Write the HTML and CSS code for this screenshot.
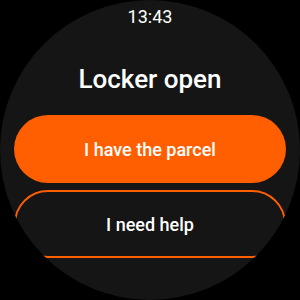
FILE: index.html
```html
<!DOCTYPE html>
<html>
<head>
<meta charset="utf-8">
<link rel="stylesheet" href="styles.css">
</head>
<body>
<div class="watch">
  <div class="time">13:43</div>
  <h1 class="title">Locker open</h1>
  <div class="actions">
    <button class="btn btn-primary">I have the parcel</button>
    <button class="btn btn-outline">I need help</button>
  </div>
</div>
</body>
</html>
```

FILE: styles.css
```css
html, body {
  margin: 0;
  padding: 0;
  background: #000;
}
.watch {
  width: 300px;
  height: 300px;
  border-radius: 50%;
  background: #151515;
  overflow: hidden;
  display: flex;
  flex-direction: column;
  align-items: center;
  font-family: Roboto, "Liberation Sans", sans-serif;
  color: #fff;
}
.time {
  margin-top: 6px;
  font-size: 18px;
  line-height: 21px;
  font-weight: 400;
}
.title {
  margin: 37px 0 0;
  font-size: 26px;
  line-height: 30px;
  font-weight: 500;
}
.actions {
  margin-top: 21px;
  display: flex;
  flex-direction: column;
  gap: 7px;
}
.btn {
  box-sizing: border-box;
  width: 272px;
  height: 68px;
  border-radius: 34px;
  font-family: inherit;
  font-size: 18px;
  font-weight: 500;
  color: #fff;
  display: flex;
  align-items: center;
  justify-content: center;
  padding: 0;
}
.btn-primary {
  background: #ff5f00;
  border: none;
}
.btn-outline {
  background: transparent;
  border: 2px solid #ff5f00;
}
```
